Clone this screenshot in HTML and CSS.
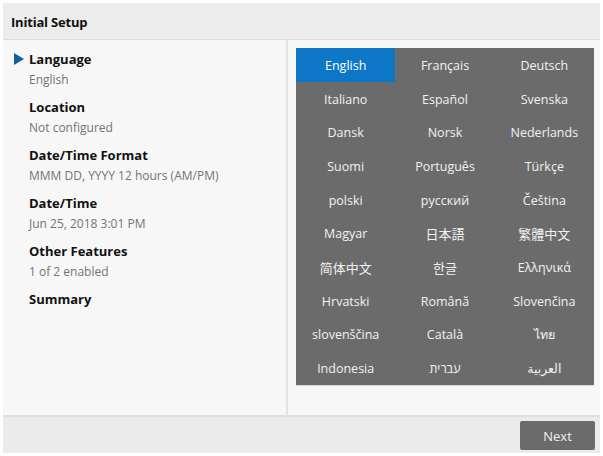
FILE: index.html
```html
<!DOCTYPE html>
<html lang="en">
<head>
<meta charset="UTF-8">
<meta name="viewport" content="width=device-width, initial-scale=1.0">
<title>Initial Setup</title>
<link rel="stylesheet" href="styles.css">
</head>
<body>

<div class="setup">
  <div class="setup-header">Initial Setup</div>

  <div class="setup-body">
    <div class="steps">
      <div class="step active">
        <div class="step-title">Language</div>
        <div class="step-value">English</div>
      </div>
      <div class="step">
        <div class="step-title">Location</div>
        <div class="step-value">Not configured</div>
      </div>
      <div class="step">
        <div class="step-title">Date/Time Format</div>
        <div class="step-value">MMM DD, YYYY 12 hours (AM/PM)</div>
      </div>
      <div class="step">
        <div class="step-title">Date/Time</div>
        <div class="step-value">Jun 25, 2018 3:01 PM</div>
      </div>
      <div class="step">
        <div class="step-title">Other Features</div>
        <div class="step-value">1 of 2 enabled</div>
      </div>
      <div class="step">
        <div class="step-title">Summary</div>
      </div>
    </div>

    <div class="content">
      <div class="lang-grid">
        <div class="lang selected">English</div>
        <div class="lang">Français</div>
        <div class="lang">Deutsch</div>
        <div class="lang">Italiano</div>
        <div class="lang">Español</div>
        <div class="lang">Svenska</div>
        <div class="lang">Dansk</div>
        <div class="lang">Norsk</div>
        <div class="lang">Nederlands</div>
        <div class="lang">Suomi</div>
        <div class="lang">Português</div>
        <div class="lang">Türkçe</div>
        <div class="lang">polski</div>
        <div class="lang">русский</div>
        <div class="lang">Čeština</div>
        <div class="lang">Magyar</div>
        <div class="lang" lang="ja">日本語</div>
        <div class="lang" lang="zh-TW">繁體中文</div>
        <div class="lang" lang="zh-CN">简体中文</div>
        <div class="lang" lang="ko">한글</div>
        <div class="lang">Ελληνικά</div>
        <div class="lang">Hrvatski</div>
        <div class="lang">Română</div>
        <div class="lang">Slovenčina</div>
        <div class="lang">slovenščina</div>
        <div class="lang">Català</div>
        <div class="lang" lang="th">ไทย</div>
        <div class="lang">Indonesia</div>
        <div class="lang" lang="he">עברית</div>
        <div class="lang" lang="ar">العربية</div>
      </div>
    </div>
  </div>

  <div class="setup-footer">
    <button class="btn-next">Next</button>
  </div>
</div>

</body>
</html>
```

FILE: styles.css
```css
/* Initial setup wizard */
body {
  font-family: "Open Sans", "Noto Sans", "Noto Sans CJK SC", sans-serif;
  margin: 0;
  padding: 3px;
  background-color: #fff;
  color: #111;
}
.setup {
  width: 597px;
  height: 450px;
  display: flex;
  flex-direction: column;
  background-color: #f7f7f7;
}
.setup-header {
  height: 37px;
  box-sizing: border-box;
  padding: 10px 8px 0 8px;
  font-size: 13px;
  font-weight: 700;
  letter-spacing: -0.2px;
  background-color: #ececec;
  border-bottom: 1px solid #dcdcdc;
}
.setup-body {
  flex: 1;
  display: flex;
}
.steps {
  width: 285px;
  box-sizing: border-box;
  padding: 9px 0 0 26px;
  border-right: 2px solid #e2e2e2;
}
.step {
  position: relative;
  height: 48px;
}
.step.active::before {
  content: "";
  position: absolute;
  left: -15px;
  top: 4px;
  border-left: 10px solid #135f96;
  border-top: 6px solid transparent;
  border-bottom: 6px solid transparent;
}
.step-title {
  font-size: 13px;
  font-weight: 700;
  line-height: 20px;
}
.step-value {
  font-size: 12px;
  line-height: 20px;
  margin-top: 1px;
  color: #747474;
}
.content {
  flex: 1;
  padding: 8px 0 0 8px;
}
.lang-grid {
  width: 298px;
  display: grid;
  grid-template-columns: repeat(3, 1fr);
  grid-auto-rows: 33.7px;
  background-color: #6b6b6b;
  border-bottom: 1px solid #d8d8d8;
}
.lang {
  display: flex;
  align-items: center;
  justify-content: center;
  padding-top: 1px;
  color: #f2f2f2;
  font-size: 12.5px;
  font-weight: 500;
  font-family: "Open Sans", "Noto Sans", "DejaVu Sans", sans-serif;
}
.lang[lang="ja"],
.lang[lang="zh-TW"],
.lang[lang="zh-CN"],
.lang[lang="ko"] {
  font-size: 13px;
  font-weight: 400;
}
.lang[lang="th"],
.lang[lang="he"],
.lang[lang="ar"] {
  font-weight: 400;
}
.lang[lang="ja"] {
  font-family: "Noto Sans CJK JP", sans-serif;
}
.lang[lang="zh-TW"] {
  font-family: "Noto Sans CJK TC", sans-serif;
}
.lang[lang="zh-CN"] {
  font-family: "Noto Sans CJK SC", sans-serif;
}
.lang[lang="ko"] {
  font-family: "Noto Sans CJK KR", sans-serif;
}
.lang.selected {
  background-color: #0e76c6;
  color: #fff;
}
.setup-footer {
  height: 38px;
  box-sizing: border-box;
  display: flex;
  justify-content: flex-end;
  align-items: flex-start;
  padding: 4px 5px 0 0;
  background-color: #ebebeb;
  border-top: 2px solid #dedede;
}
.btn-next {
  width: 75px;
  height: 29px;
  border: none;
  border-radius: 2px;
  background-color: #6b6b6b;
  color: #f0f0f0;
  font-family: "Open Sans", "Noto Sans", sans-serif;
  font-size: 13px;
  font-weight: 500;
  cursor: pointer;
}
```
